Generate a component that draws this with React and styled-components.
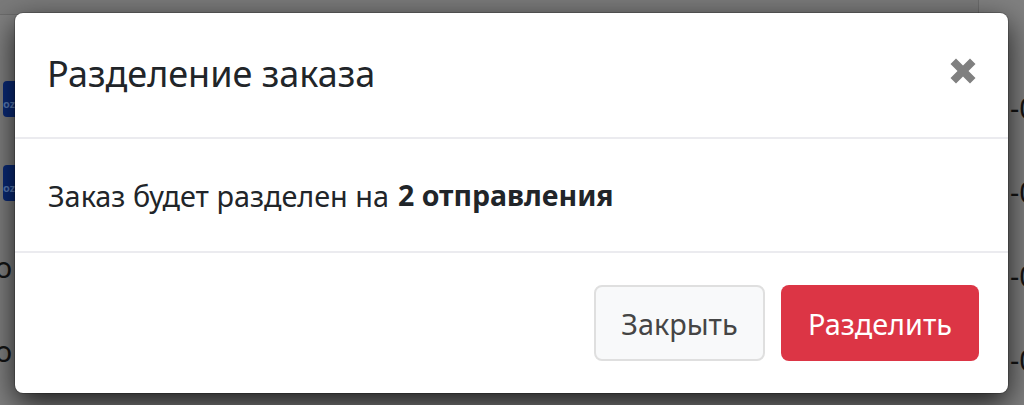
import React from 'react'
import styled, { createGlobalStyle } from 'styled-components'

const GlobalStyle = createGlobalStyle`
  html, body {
    margin: 0;
    padding: 0;
    background: #808080;
    overflow: hidden;
  }
`

function App() {
  return (
    <>
      <GlobalStyle />
      <Page>
        <TopBar />
        <Rows>
          <Row>
            <Badge>oz</Badge>
            <Amount>-0</Amount>
          </Row>
          <Row>
            <Badge>oz</Badge>
            <Amount>-0</Amount>
          </Row>
          <Row>
            <Name>о</Name>
            <Amount>-0</Amount>
          </Row>
          <Row>
            <Name>о</Name>
            <Amount>-0</Amount>
          </Row>
        </Rows>
        <Modal>
          <Header>
            <Title>Разделение заказа</Title>
            <CloseIcon viewBox="0 0 26 26" aria-hidden="true">
              <path d="M6 .5 13 7.500 20 .5 25.500 6 18.500 13 25.500 20 20 25.500 13 18.500 6 25.500 .5 20 7.500 13 .5 6Z" />
            </CloseIcon>
          </Header>
          <Body>
            <span>Заказ будет разделен на</span>
            <b>2 отправления</b>
          </Body>
          <Footer>
            <CloseButton>Закрыть</CloseButton>
            <SplitButton>Разделить</SplitButton>
          </Footer>
        </Modal>
      </Page>
    </>
  )
}

const Page = styled.div`
  position: relative;
  width: 1024px;
  height: 405px;
  overflow: hidden;
  font-family: "Noto Sans", "Liberation Sans", sans-serif;
  background: #808080;
`
const TopBar = styled.div`
  width: 978px;
  height: 14px;
  background: #7a7a7a;
  border-right: 1px solid #6c6c6c;
  border-bottom: 1px solid #6c6c6c;
`
const Rows = styled.div`
  margin-top: 42px;
  display: flex;
  flex-direction: column;
`
const Row = styled.div`
  height: 84px;
  display: flex;
  align-items: center;
  justify-content: space-between;
`
const Badge = styled.div`
  width: 24px;
  height: 36px;
  margin-left: 3px;
  box-sizing: border-box;
  padding-top: 17px;
  border-radius: 4px;
  background: #0a2a78;
  font-size: 11px;
  font-weight: 700;
  line-height: 12px;
  color: #5b7db8;
  overflow: hidden;
`
const Name = styled.div`
  margin-left: -5px;
  font-size: 28.8px;
  line-height: 30px;
  color: #141414;
`
const Amount = styled.div`
  margin-top: 18px;
  margin-right: -10px;
  width: 24px;
  font-size: 28.8px;
  line-height: 30px;
  color: #141414;
  white-space: nowrap;
`
const Modal = styled.div`
  position: absolute;
  left: 15px;
  top: 13px;
  width: 993px;
  height: 380px;
  border-radius: 8px;
  background: #fff;
  box-shadow: 0 0 0 1px rgba(0, 0, 0, 0.2), 0 10px 30px rgba(0, 0, 0, 0.8);
  display: flex;
  flex-direction: column;
`
const Header = styled.div`
  height: 126px;
  box-sizing: border-box;
  padding: 0 32px 3px 32px;
  display: flex;
  align-items: center;
  justify-content: space-between;
  border-bottom: 2px solid #ebebef;
`
const Title = styled.h5`
  margin: 0;
  font-size: 36px;
  font-weight: 400;
  color: #212529;
`
const CloseIcon = styled.svg`
  width: 26px;
  height: 26px;
  fill: #808080;
  margin-bottom: 6px;
`
const Body = styled.div`
  height: 114px;
  box-sizing: border-box;
  padding: 0 33px;
  display: flex;
  align-items: center;
  gap: 9px;
  font-size: 28.8px;
  color: #212529;
  border-bottom: 2px solid #ebebef;
  b {
    font-size: 28.5px;
    font-weight: 700;
  }
`
const Footer = styled.div`
  flex: 1;
  display: flex;
  justify-content: flex-end;
  gap: 16px;
  padding: 32px 29px 0 0;
`
const BaseButton = styled.button`
  height: 76px;
  box-sizing: border-box;
  border-radius: 8px;
  font-family: inherit;
  font-size: 28.8px;
  cursor: pointer;
`
const CloseButton = styled(BaseButton)`
  width: 171px;
  color: #454545;
  background: #f8f9fa;
  border: 2px solid #dfdfdf;
`
const SplitButton = styled(BaseButton)`
  width: 198px;
  color: #fff;
  background: #dc3545;
  border: 0;
`

export default App
